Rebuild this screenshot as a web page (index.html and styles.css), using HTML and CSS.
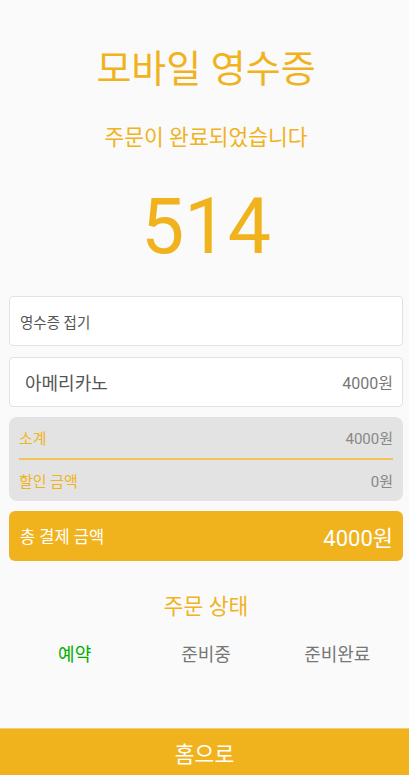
FILE: index.html
```html
<!DOCTYPE html>
<html lang="ko">
<head>
<meta charset="utf-8">
<title>모바일 영수증</title>
<link rel="stylesheet" href="styles.css">
</head>
<body>
<div class="page">
  <main class="content">
    <h1 class="title">모바일 영수증</h1>
    <p class="subtitle">주문이 완료되었습니다</p>
    <div class="number">514</div>

    <div class="card fold">영수증 접기</div>

    <div class="card item">
      <span class="item-name">아메리카노</span>
      <span class="item-price">4000원</span>
    </div>

    <div class="summary">
      <div class="sum-row"><span class="sum-label">소계</span><span class="sum-value">4000원</span></div>
      <div class="sum-line"></div>
      <div class="sum-row"><span class="sum-label">할인 금액</span><span class="sum-value">0원</span></div>
    </div>

    <div class="total">
      <span class="total-label">총 결제 금액</span>
      <span class="total-value">4000원</span>
    </div>

    <h2 class="status-title">주문 상태</h2>
    <div class="status-row">
      <span class="status active">예약</span>
      <span class="status">준비중</span>
      <span class="status">준비완료</span>
    </div>
  </main>
  <footer class="home-bar">홈으로</footer>
</div>
</body>
</html>
```
FILE: styles.css
```css
* { box-sizing: border-box; }
html, body { margin: 0; padding: 0; }
body {
  background: #fafafa;
  font-family: Roboto, "Noto Sans CJK KR", "Noto Sans", sans-serif;
}
.page {
  min-height: 775px;
  display: flex;
  flex-direction: column;
}
.content {
  flex: 1;
  padding: 0 6px 0 9px;
  display: flex;
  flex-direction: column;
}
.title {
  margin: 48px 0 0;
  font-size: 38px;
  line-height: 42px;
  font-weight: 400;
  color: #f0b31e;
  text-align: center;
}
.subtitle {
  margin: 36px 0 0;
  font-size: 21.5px;
  line-height: 24px;
  color: #f0b31e;
  text-align: center;
}
.number {
  margin-top: 37px;
  font-size: 77px;
  line-height: 80px;
  color: #f0b31e;
  text-align: center;
}
.card {
  height: 50px;
  background: #fff;
  border: 1px solid #e2e2e2;
  border-radius: 4px;
  display: flex;
  align-items: center;
}
.fold {
  margin-top: 29px;
  padding-left: 10px;
  font-size: 14.5px;
  color: #555;
}
.item {
  margin-top: 11px;
  padding: 0 9px 0 15px;
  justify-content: space-between;
}
.item-name { font-size: 18px; color: #555; }
.item-price { font-size: 16px; color: #777; }
.summary {
  margin-top: 10px;
  background: #e3e3e3;
  border-radius: 8px;
  padding: 0 10px;
}
.sum-row {
  height: 41px;
  display: flex;
  align-items: center;
  justify-content: space-between;
  font-size: 15px;
}
.sum-label { color: #f0b31e; }
.sum-value { color: #888; }
.sum-line { height: 2px; background: #f1c55b; }
.total {
  margin-top: 10px;
  height: 50px;
  border-radius: 6px;
  background: #f0b31e;
  display: flex;
  align-items: center;
  justify-content: space-between;
  padding: 0 10px 0 11px;
  color: #fff;
}
.total-label { font-size: 16.5px; }
.total-value { font-size: 22px; }
.status-title {
  margin: 34px 0 0;
  font-size: 21.5px;
  line-height: 24px;
  font-weight: 400;
  color: #f0b31e;
  text-align: center;
}
.status-row {
  margin-top: 26px;
  display: grid;
  grid-template-columns: 1fr 1fr 1fr;
  font-size: 18px;
  line-height: 20px;
  text-align: center;
}
.status { color: #777; }
.status.active { color: #00ad00; }
.home-bar {
  height: 47px;
  background: #f0b31e;
  border-top: 1px solid #f4cf73;
  color: #fff;
  font-size: 21.5px;
  display: flex;
  align-items: center;
  justify-content: center;
}
```
